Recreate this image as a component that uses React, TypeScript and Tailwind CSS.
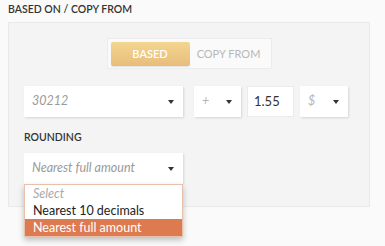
import { FC } from "react";

const Caret: FC = () => (
  <svg width="6" height="4" viewBox="0 0 6 4" className="shrink-0">
    <path d="M0 0h6L3 4z" fill="#333" />
  </svg>
);

const SelectBox: FC<{ value: string; className: string; dim?: boolean }> = ({
  value,
  className,
  dim,
}) => (
  <div
    className={`flex items-center justify-between bg-white h-[31px] pl-[8px] pr-[9px] shadow-[1px_1px_2px_rgba(0,0,0,0.12)] ${className}`}
  >
    <span
      className={`italic text-[12.5px] ${dim ? "text-[#b5b5b5]" : "text-[#9a9a9a]"}`}
    >
      {value}
    </span>
    <Caret />
  </div>
);

const App: FC = () => {
  return (
    <div
      className="w-[385px] h-[246px] bg-[#fafafa] overflow-hidden pt-[3px]"
      style={{ fontFamily: "Lato, 'Open Sans', sans-serif" }}
    >
      <p className="ml-[8px] text-[10.5px] font-semibold text-[#333] leading-[13px]">
        BASED ON / COPY FROM
      </p>
      <div className="ml-[8px] mt-[6px] w-[362px] h-[185px] bg-[#f4f4f4] border border-[#e9e9e9] pt-[15px] pl-[15px]">
        <div className="flex justify-center pr-[15px]">
          <div className="flex w-[165px] h-[31px] p-[3px] bg-[#fafafa] border border-[#ececec]">
            <button className="w-[79px] h-[24px] rounded-[2px] bg-gradient-to-b from-[#f3d68f] to-[#e8bc7d] text-white text-[11px] font-semibold shadow-[0_1px_1px_rgba(0,0,0,0.1)]">
              BASED
            </button>
            <button className="flex-1 h-[24px] text-[#b8b8b8] text-[11px]">
              COPY FROM
            </button>
          </div>
        </div>
        <div className="flex mt-[17px] items-center">
          <SelectBox value="30212" className="w-[159px]" />
          <SelectBox value="+" className="w-[47px] ml-[11px]" dim />
          <div className="w-[47px] ml-[6px] h-[31px] bg-white border border-[#ebebeb] flex items-center pl-[6px] text-[13px] text-[#333]">
            1.55
          </div>
          <SelectBox value="$" className="w-[48px] ml-[6px]" dim />
        </div>
        <p className="mt-[14px] text-[10.5px] font-semibold text-[#333] leading-[13px]">
          ROUNDING
        </p>
        <div className="relative mt-[9px] w-[159px]">
          <SelectBox value="Nearest full amount" className="w-[159px]" />
          <div className="absolute left-0 top-[31px] w-[159px] bg-white border border-[#e6c2ac] shadow-[0_3px_6px_rgba(0,0,0,0.25)] text-[12.5px] z-10">
            <div className="h-[17px] leading-[17px] pl-[8px] italic text-[#aaa]">
              Select
            </div>
            <div className="h-[17px] leading-[17px] pl-[8px] text-[#222]">
              Nearest 10 decimals
            </div>
            <div className="h-[17px] leading-[17px] pl-[8px] text-white bg-[#de7a4f]">
              Nearest full amount
            </div>
          </div>
        </div>
      </div>
    </div>
  );
};

export default App;
